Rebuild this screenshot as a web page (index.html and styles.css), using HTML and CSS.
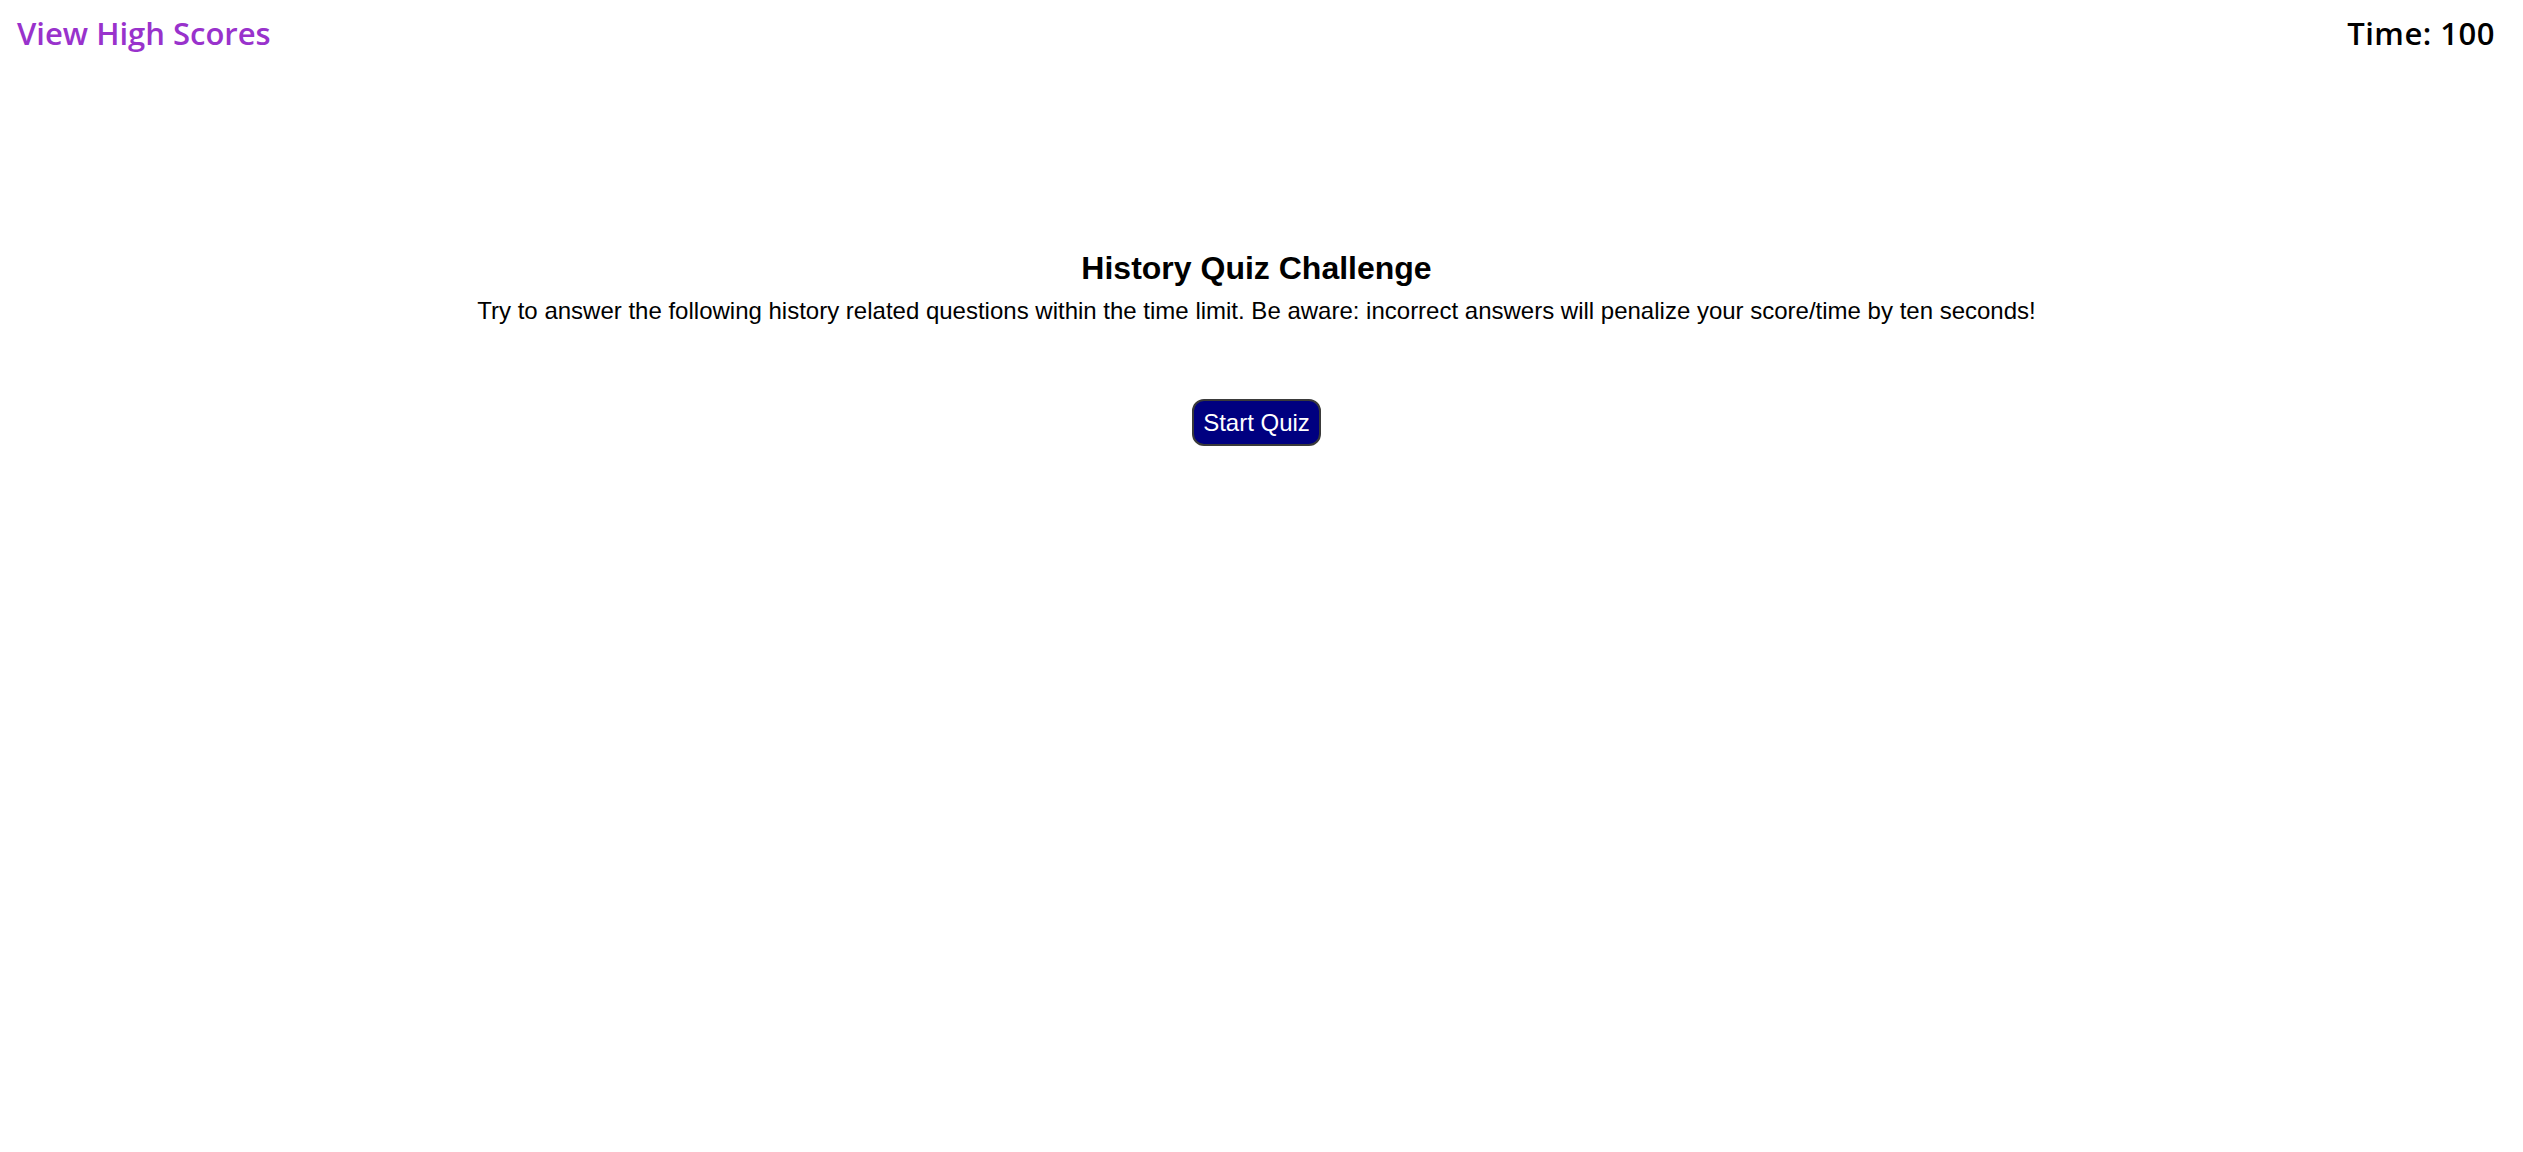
FILE: index.html
```html
<!DOCTYPE html>
<html lang="en">
<head>
<meta charset="utf-8">
<title>History Quiz Challenge</title>
<link rel="stylesheet" href="styles.css">
</head>
<body>
<header class="top-bar">
  <a class="high-scores" href="#">View High Scores</a>
  <div class="timer">Time: 100</div>
</header>
<main class="intro">
  <h1 class="intro-title">History Quiz Challenge</h1>
  <p class="intro-text">Try to answer the following history related questions within the time limit. Be aware: incorrect answers will penalize your score/time by ten seconds!</p>
  <button class="start-btn" type="button">Start Quiz</button>
</main>
</body>
</html>
```
FILE: styles.css
```css
html, body {
  margin: 0;
  padding: 0;
  background: #ffffff;
}
body {
  font-family: "Liberation Sans", Arial, sans-serif;
  color: #000;
}
.top-bar {
  display: flex;
  justify-content: space-between;
  align-items: flex-start;
  padding: 13px 28px 0 17px;
  font-family: "Open Sans", Lato, sans-serif;
  font-weight: 600;
  font-size: 31px;
  line-height: 40px;
}
.high-scores {
  color: #9932cc;
  text-decoration: none;
}
.timer {
  color: #000;
  letter-spacing: 0.5px;
}
.intro {
  display: flex;
  flex-direction: column;
  align-items: center;
  text-align: center;
  padding: 195px 10px 0 0;
}
.intro-title {
  margin: 0;
  font-size: 32px;
  line-height: 40px;
  font-weight: 700;
}
.intro-text {
  margin: 5px 0 0;
  font-size: 24px;
  line-height: 36px;
}
.start-btn {
  margin-top: 70px;
  font-family: "Liberation Sans", Arial, sans-serif;
  font-size: 24px;
  color: #fff;
  background: #000080;
  border: 2px solid #3a3a3a;
  border-radius: 12px;
  padding: 0 9px;
  height: 47px;
  line-height: 43px;
}
```
